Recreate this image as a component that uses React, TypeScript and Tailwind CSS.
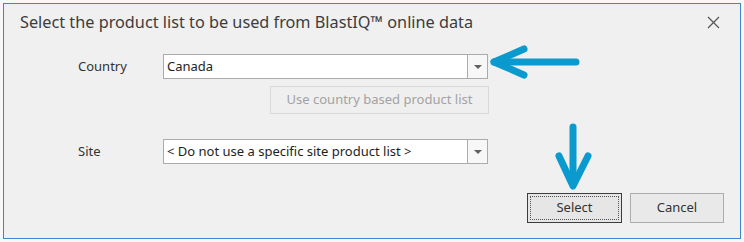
import { memo } from "react";

const font = { fontFamily: '"Noto Sans", "Open Sans", sans-serif' };

const Combo = ({ value }: { value: string }) => (
  <div className="flex h-[25px] w-[325px] border border-[#ababab] bg-white">
    <div className="flex flex-1 items-center pl-[3px] text-[13px] text-[#1e1e1e]">{value}</div>
    <div className="flex w-[20px] items-center justify-center border-l border-[#ababab] bg-[#f7f7f7]">
      <div className="h-0 w-0 border-x-[4px] border-t-[4px] border-x-transparent border-t-[#606060]" />
    </div>
  </div>
);

const Arrows = () => (
  <svg
    className="pointer-events-none absolute left-0 top-0"
    width="744"
    height="242"
    viewBox="0 0 744 242"
  >
    <g stroke="#0a9acd" strokeLinecap="round" strokeLinejoin="round" fill="none">
      <path d="M576 62 L494 62" strokeWidth="7" />
      <path d="M524 49 L494 62 L524 75" strokeWidth="7" />
      <path d="M573 127 L573 184" strokeWidth="7" />
      <path d="M559 156 L573 186 L588 156" strokeWidth="7" />
    </g>
  </svg>
);

const App = () => {
  return (
    <div className="relative h-[242px] w-[744px] bg-[#f8f8f8] p-[3px]" style={font}>
      <div className="flex h-[236px] flex-col border border-[#3a86d4] bg-[#f0f0f0]">
        {/* title bar */}
        <div className="flex h-[36px] items-center justify-between pl-[16px] pr-[20px]">
          <div className="text-[16.25px] text-[#3c3c3c]">
            Select the product list to be used from BlastIQ™ online data
          </div>
          <svg width="13" height="13" viewBox="0 0 13 13">
            <path d="M1 1 L12 12 M12 1 L1 12" stroke="#555" strokeWidth="1.2" />
          </svg>
        </div>

        {/* country */}
        <div className="mt-[14px] flex items-center pl-[74px]">
          <div className="w-[85px] text-[13px] text-[#333]">Country</div>
          <Combo value="Canada" />
        </div>
        <div className="mt-[7px] flex pl-[266px]">
          <div className="flex h-[28px] w-[219px] items-center justify-center border border-[#d9d9d9] bg-[#efefef] text-[13px] text-[#a2a2a2]">
            Use country based product list
          </div>
        </div>

        {/* site */}
        <div className="mt-[25px] flex items-center pl-[74px]">
          <div className="w-[85px] text-[13px] text-[#333]">Site</div>
          <Combo value="< Do not use a specific site product list >" />
        </div>

        {/* buttons */}
        <div className="mt-[29px] flex justify-end gap-[8px] pr-[16px]">
          <div className="h-[30px] w-[95px] border border-[#3c3c3c] bg-[#e6e6e6] p-[2px]">
            <div className="flex h-full items-center justify-center border border-dotted border-[#555] text-[13px] text-[#333]">
              Select
            </div>
          </div>
          <div className="flex h-[30px] w-[94px] items-center justify-center border border-[#adadad] bg-[#e9e9e9] text-[13px] text-[#333]">
            Cancel
          </div>
        </div>
      </div>
      <Arrows />
    </div>
  );
};

export default memo(App);
